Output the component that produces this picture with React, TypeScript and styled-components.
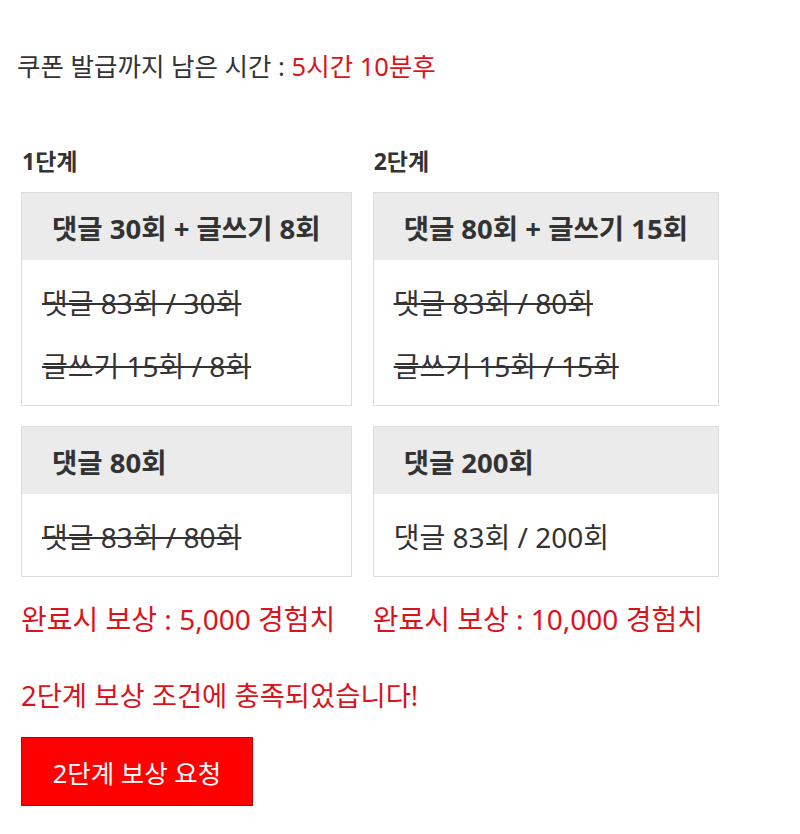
import styled, { createGlobalStyle } from 'styled-components';

const GlobalStyle = createGlobalStyle`
  body {
    margin: 0;
    background: #ffffff;
    font-family: 'Noto Sans', 'Noto Sans CJK KR', sans-serif;
    color: #333333;
  }
`;

const Page = styled.div`
  padding: 44px 21px 28px;
`;

const Timer = styled.p`
  margin: 0 0 0 -4px;
  font-size: 25.5px;
  line-height: 44px;
  color: #333333;
`;

const Red = styled.span`
  color: #d9141b;
`;

const Stages = styled.div`
  display: flex;
  gap: 21px;
  margin-top: 58px;
`;

const Stage = styled.div`
  display: flex;
  flex-direction: column;
`;

const StageTitle = styled.h3`
  margin: 0 0 16px 1px;
  font-size: 23px;
  font-weight: 700;
  line-height: 30px;
`;

const Cards = styled.div`
  display: flex;
  flex-direction: column;
  gap: 20px;
`;

const Card = styled.div`
  border: 1px solid #dddddd;
  background: #ffffff;
`;

const CardHeader = styled.div`
  height: 67px;
  padding: 0 30px;
  display: flex;
  align-items: center;
  background: #ebebeb;
  font-size: 27.5px;
  font-weight: 700;
  white-space: nowrap;
`;

const CardBody = styled.div`
  display: flex;
  flex-direction: column;
  gap: 23px;
  padding: 23px 20px 19px;
`;

const Line = styled.div<{ $done?: boolean }>`
  font-size: 28px;
  line-height: 40px;
  white-space: nowrap;
  text-decoration: ${({ $done }) => ($done ? 'line-through' : 'none')};
`;

const Reward = styled.p`
  margin: 22px 0 0;
  font-size: 28px;
  line-height: 40px;
  color: #d9141b;
  white-space: nowrap;
`;

const Notice = styled.p`
  margin: 37px 0 0;
  font-size: 27.4px;
  line-height: 40px;
  color: #d9141b;
`;

const RequestButton = styled.button`
  margin-top: 21px;
  width: 232px;
  height: 69px;
  border: 1px solid #c40000;
  background: #ff0000;
  color: #ffffff;
  font-family: inherit;
  font-size: 25.5px;
  cursor: pointer;
`;

interface Mission {
  title: string;
  lines: { text: string; done: boolean }[];
}

const stages: { name: string; reward: string; missions: Mission[] }[] = [
  {
    name: '1단계',
    reward: '5,000',
    missions: [
      {
        title: '댓글 30회 + 글쓰기 8회',
        lines: [
          { text: '댓글 83회 / 30회', done: true },
          { text: '글쓰기 15회 / 8회', done: true },
        ],
      },
      {
        title: '댓글 80회',
        lines: [{ text: '댓글 83회 / 80회', done: true }],
      },
    ],
  },
  {
    name: '2단계',
    reward: '10,000',
    missions: [
      {
        title: '댓글 80회 + 글쓰기 15회',
        lines: [
          { text: '댓글 83회 / 80회', done: true },
          { text: '글쓰기 15회 / 15회', done: true },
        ],
      },
      {
        title: '댓글 200회',
        lines: [{ text: '댓글 83회 / 200회', done: false }],
      },
    ],
  },
];

const App = () => {
  return (
    <>
      <GlobalStyle />
      <Page>
        <Timer>
          쿠폰 발급까지 남은 시간 : <Red>5시간 10분후</Red>
        </Timer>
        <Stages>
          {stages.map((stage) => (
            <Stage key={stage.name}>
              <StageTitle>{stage.name}</StageTitle>
              <Cards>
                {stage.missions.map((mission) => (
                  <Card key={mission.title}>
                    <CardHeader>{mission.title}</CardHeader>
                    <CardBody>
                      {mission.lines.map((line) => (
                        <Line key={line.text} $done={line.done}>
                          {line.text}
                        </Line>
                      ))}
                    </CardBody>
                  </Card>
                ))}
              </Cards>
              <Reward>완료시 보상 : {stage.reward} 경험치</Reward>
            </Stage>
          ))}
        </Stages>
        <Notice>2단계 보상 조건에 충족되었습니다!</Notice>
        <RequestButton>2단계 보상 요청</RequestButton>
      </Page>
    </>
  );
};

export default App;
